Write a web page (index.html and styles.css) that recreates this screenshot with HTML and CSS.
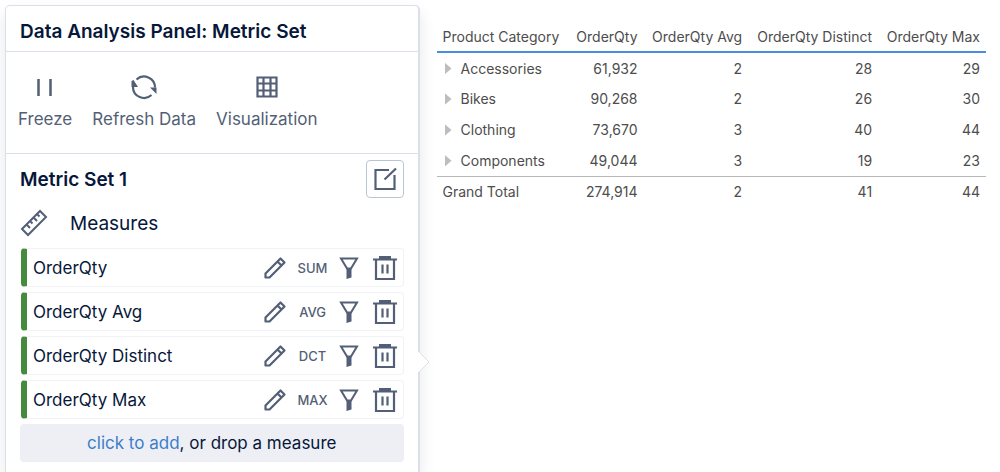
FILE: index.html
```html
<!DOCTYPE html>
<html lang="en">
<head>
  <meta charset="UTF-8">
  <meta name="viewport" content="width=device-width, initial-scale=1.0">
  <title>Data Analysis Panel</title>
  <link rel="stylesheet" href="styles.css">
</head>
<body>
  <!-- Shared icons -->
  <svg class="sprite" aria-hidden="true">
    <symbol id="icon-pencil" viewBox="0 0 24 24">
      <path d="M2.500 21.500v-4L17.500 2.500l4 4L6.500 21.500zM14.500 5.500l4 4" fill="none" stroke="currentColor" stroke-width="2.200" stroke-linejoin="round"/>
    </symbol>
    <symbol id="icon-filter" viewBox="0 0 20 24">
      <path d="M2 2.500h16L12 12.500H8z" fill="none" stroke="currentColor" stroke-width="2"/>
      <path d="M7.500 12h5v9.500L7.500 23z" fill="currentColor"/>
    </symbol>
    <symbol id="icon-trash" viewBox="0 0 24 26">
      <path d="M6 1h12v3H6z" fill="currentColor"/>
      <path d="M0 4.500h24M3 5v19h18V5M9.500 9.500v9M14.500 9.500v9" fill="none" stroke="currentColor" stroke-width="2.200"/>
    </symbol>
  </svg>

  <div class="layout">
    <section class="panel">
      <h1 class="panel-title">Data Analysis Panel: Metric Set</h1>

      <div class="toolbar">
        <button class="tool" type="button">
          <svg width="28" height="28" viewBox="0 0 28 28"><path d="M7.500 6v17M19.500 6v17" stroke="currentColor" stroke-width="2.500"/></svg>
          Freeze
        </button>
        <button class="tool" type="button">
          <svg width="28" height="28" viewBox="0 0 28 28">
            <path d="M6.500 6.500A11 11 0 0 1 25 14.500M21.500 22A11 11 0 0 1 3 14" fill="none" stroke="currentColor" stroke-width="2.200"/>
            <path d="M20 14.500h6.500v6.500zM8 14H1.500V8l2-1z" fill="currentColor"/>
          </svg>
          Refresh Data
        </button>
        <button class="tool" type="button">
          <svg width="28" height="28" viewBox="0 0 28 28"><path d="M4.500 4.500h19v19h-19zM10.500 4v20M17.500 4v20M4 10.500h20M4 17.500h20" fill="none" stroke="currentColor" stroke-width="2.200"/></svg>
          Visualization
        </button>
      </div>

      <div class="metric-set">
        <div class="metric-header">
          <h2>Metric Set 1</h2>
          <button class="edit-btn" type="button" aria-label="Edit metric set">
            <svg width="24" height="24" viewBox="0 0 24 24"><path d="M16 3H2.500v19h19V8M11.500 12.500L23 1.500" fill="none" stroke="currentColor" stroke-width="2.200"/></svg>
          </button>
        </div>

        <h3 class="measures-title">
          <svg width="28" height="28" viewBox="0 0 28 28"><path d="M2 20L20 2l6 6L8 26zM7 16l3 3M10.500 12.500l2 2M14 9l3 3M17.500 5.500l2 2" fill="none" stroke="currentColor" stroke-width="2"/></svg>
          Measures
        </h3>

        <ul class="measures">
          <li class="measure">
            <span class="measure-name">OrderQty</span>
            <button class="icon-btn" type="button" aria-label="Edit"><svg width="24" height="24"><use href="#icon-pencil"/></svg></button>
            <button class="aggregate" type="button">SUM</button>
            <button class="icon-btn" type="button" aria-label="Filter"><svg width="20" height="24"><use href="#icon-filter"/></svg></button>
            <button class="icon-btn delete" type="button" aria-label="Delete"><svg width="24" height="26"><use href="#icon-trash"/></svg></button>
          </li>
          <li class="measure">
            <span class="measure-name">OrderQty Avg</span>
            <button class="icon-btn" type="button" aria-label="Edit"><svg width="24" height="24"><use href="#icon-pencil"/></svg></button>
            <button class="aggregate" type="button">AVG</button>
            <button class="icon-btn" type="button" aria-label="Filter"><svg width="20" height="24"><use href="#icon-filter"/></svg></button>
            <button class="icon-btn delete" type="button" aria-label="Delete"><svg width="24" height="26"><use href="#icon-trash"/></svg></button>
          </li>
          <li class="measure">
            <span class="measure-name">OrderQty Distinct</span>
            <button class="icon-btn" type="button" aria-label="Edit"><svg width="24" height="24"><use href="#icon-pencil"/></svg></button>
            <button class="aggregate" type="button">DCT</button>
            <button class="icon-btn" type="button" aria-label="Filter"><svg width="20" height="24"><use href="#icon-filter"/></svg></button>
            <button class="icon-btn delete" type="button" aria-label="Delete"><svg width="24" height="26"><use href="#icon-trash"/></svg></button>
          </li>
          <li class="measure">
            <span class="measure-name">OrderQty Max</span>
            <button class="icon-btn" type="button" aria-label="Edit"><svg width="24" height="24"><use href="#icon-pencil"/></svg></button>
            <button class="aggregate" type="button">MAX</button>
            <button class="icon-btn" type="button" aria-label="Filter"><svg width="20" height="24"><use href="#icon-filter"/></svg></button>
            <button class="icon-btn delete" type="button" aria-label="Delete"><svg width="24" height="26"><use href="#icon-trash"/></svg></button>
          </li>
        </ul>

        <div class="drop-zone"><a href="#">click to add</a>, or drop a measure</div>
      </div>
      <svg class="panel-arrow" width="12" height="24" viewBox="0 0 12 24"><path d="M0 1l11 11L0 23" fill="#fff" stroke="#dfe1ea"/></svg>
    </section>

    <main class="report">
      <table>
        <thead>
          <tr><th>Product Category</th><th>OrderQty</th><th>OrderQty Avg</th><th>OrderQty Distinct</th><th>OrderQty Max</th></tr>
        </thead>
        <tbody>
          <tr><th><button class="expand" type="button" aria-label="Expand Accessories"></button>Accessories</th><td>61,932</td><td>2</td><td>28</td><td>29</td></tr>
          <tr><th><button class="expand" type="button" aria-label="Expand Bikes"></button>Bikes</th><td>90,268</td><td>2</td><td>26</td><td>30</td></tr>
          <tr><th><button class="expand" type="button" aria-label="Expand Clothing"></button>Clothing</th><td>73,670</td><td>3</td><td>40</td><td>44</td></tr>
          <tr><th><button class="expand" type="button" aria-label="Expand Components"></button>Components</th><td>49,044</td><td>3</td><td>19</td><td>23</td></tr>
        </tbody>
        <tfoot>
          <tr><th>Grand Total</th><td>274,914</td><td>2</td><td>41</td><td>44</td></tr>
        </tfoot>
      </table>
    </main>
  </div>
</body>
</html>
```
FILE: styles.css
```css
* {
  box-sizing: border-box;
}

body {
  margin: 0;
  background: #fff;
  color: #07173a;
  font-family: Inter, "Liberation Sans", sans-serif;
}

h1, h2, h3 {
  margin: 0;
}

button {
  padding: 0;
  border: none;
  background: none;
  color: #535f76;
  font-family: inherit;
  cursor: pointer;
}

svg {
  display: block;
}

.sprite {
  display: none;
}

.layout {
  display: grid;
  grid-template-columns: 43fr 57fr;
  gap: 17px;
  min-height: 100vh;
  padding: 5px 14px 0 5px;
}

/* Side panel */
.panel {
  position: relative;
  border: 1px solid #dcdfe9;
  border-right-width: 2px;
  border-bottom: none;
  border-radius: 5px 5px 0 0;
  background: #fff;
  box-shadow: 0 8px 16px rgba(20, 30, 50, 0.1);
}

.panel-title {
  padding: 6px 14px 0;
  border-bottom: 1px solid #dcdfe9;
  font-size: 19px;
  font-weight: 600;
  line-height: 39px;
}

.toolbar {
  display: flex;
  gap: 20px;
  padding: 21px 12px 22px;
  border-bottom: 1px solid #dcdfe9;
}

.tool {
  display: flex;
  flex-direction: column;
  align-items: center;
  gap: 6px;
  font-size: 17px;
  line-height: 24px;
}

.metric-set {
  padding: 6px 14px 10px;
}

.metric-header {
  display: flex;
  justify-content: space-between;
  align-items: center;
}

.metric-header h2 {
  font-size: 19px;
  font-weight: 600;
}

.edit-btn {
  display: grid;
  place-items: center;
  width: 38px;
  height: 38px;
  border: 1px solid #b9c4d4;
  border-radius: 4px;
}

.measures-title {
  display: flex;
  align-items: center;
  gap: 22px;
  height: 50px;
  font-size: 19px;
  font-weight: 400;
}

.measures-title svg {
  color: #535f76;
}

.measures {
  display: flex;
  flex-direction: column;
  gap: 5px;
  margin: 0;
  padding: 0;
  list-style: none;
}

.measure {
  display: flex;
  align-items: center;
  height: 39px;
  margin-left: 1px;
  padding: 0 6px;
  border: 1px solid #f1f2f5;
  border-left: 6px solid #468a40;
  border-radius: 4px;
}

.measure-name {
  flex: 1;
  font-size: 17px;
}

.aggregate {
  width: 52px;
  font-size: 13px;
  font-weight: 500;
}

.delete {
  margin-left: 14px;
}

.drop-zone {
  margin-top: 5px;
  border-radius: 4px;
  background: #eeeff4;
  font-size: 17px;
  line-height: 38px;
  text-align: center;
}

.drop-zone a {
  color: #3b7dcc;
  text-decoration: none;
}

.panel-arrow {
  position: absolute;
  top: 344px;
  right: -12px;
}

/* Report table */
.report {
  padding-top: 16px;
}

table {
  width: 100%;
  border-collapse: collapse;
  color: #4d4d4d;
  font-size: 14px;
}

th, td {
  height: 31px;
  padding: 0 6px;
  font-weight: 400;
  text-align: right;
  white-space: nowrap;
}

th:first-child {
  text-align: left;
}

thead tr {
  border-bottom: 2px solid #4a8ddb;
}

tfoot tr {
  border-top: 1px solid #b8b8b8;
}

.expand {
  width: 7px;
  height: 12px;
  margin: 0 9px 0 2px;
  background: #bdbdbd;
  clip-path: polygon(0 0, 100% 50%, 0 100%);
  vertical-align: -1px;
}
```
